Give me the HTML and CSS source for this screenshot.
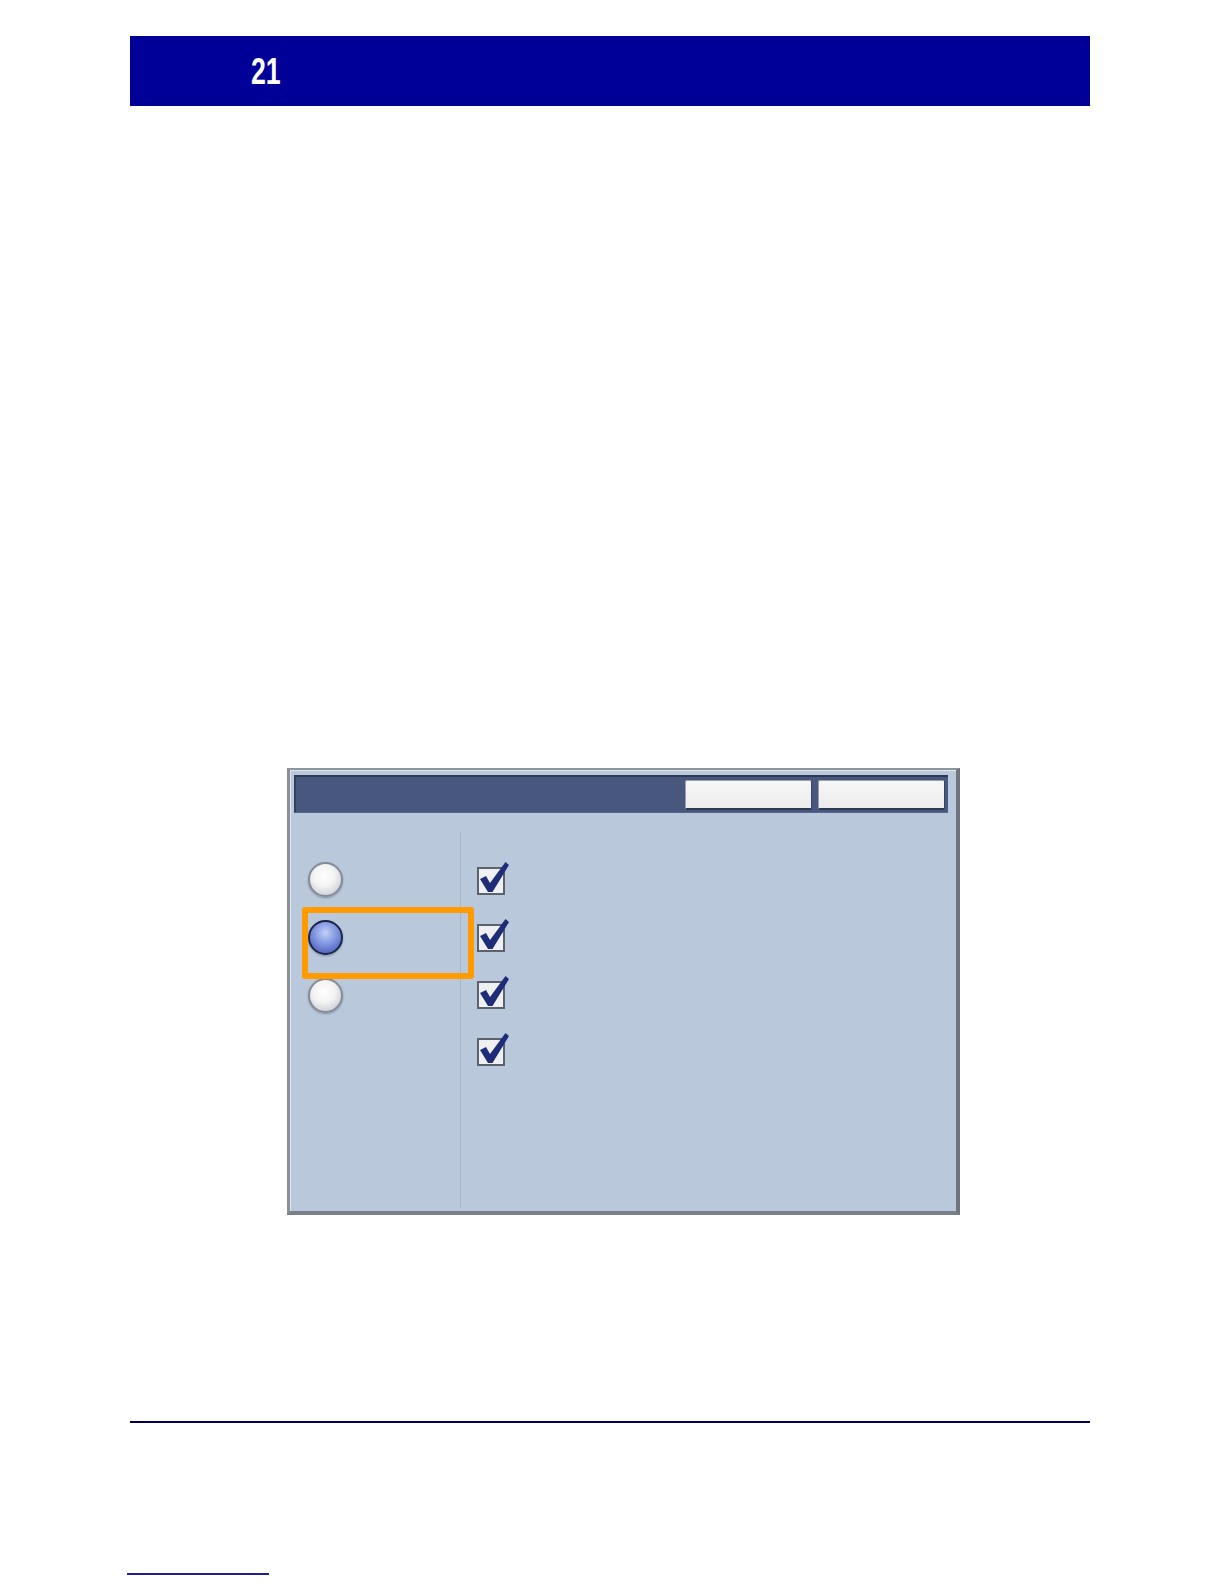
FILE: index.html
```html
<!DOCTYPE html>
<html>
<head>
<meta charset="utf-8">
<link rel="stylesheet" href="styles.css">
</head>
<body>
<div class="page">
  <div class="header"><span class="num">21</span></div>

  <div class="panel">
    <div class="titlebar">
      <div class="buttons">
        <div class="btn"></div>
        <div class="btn"></div>
      </div>
    </div>
    <div class="body">
      <div class="col-left">
        <div class="radio"></div>
        <div class="radio selected"></div>
        <div class="radio"></div>
      </div>
      <div class="col-right">
        <svg class="check" viewBox="0 0 34 34" width="34" height="34"><rect x="1" y="5" width="26" height="26" fill="#eef0f3" stroke="#5c626b" stroke-width="2"/><polygon points="3,16 9,13 13,20 28.5,-1 32,2 15.5,29 11,29" fill="#1f2d78"/></svg>
        <svg class="check" viewBox="0 0 34 34" width="34" height="34"><rect x="1" y="5" width="26" height="26" fill="#eef0f3" stroke="#5c626b" stroke-width="2"/><polygon points="3,16 9,13 13,20 28.5,-1 32,2 15.5,29 11,29" fill="#1f2d78"/></svg>
        <svg class="check" viewBox="0 0 34 34" width="34" height="34"><rect x="1" y="5" width="26" height="26" fill="#eef0f3" stroke="#5c626b" stroke-width="2"/><polygon points="3,16 9,13 13,20 28.5,-1 32,2 15.5,29 11,29" fill="#1f2d78"/></svg>
        <svg class="check" viewBox="0 0 34 34" width="34" height="34"><rect x="1" y="5" width="26" height="26" fill="#eef0f3" stroke="#5c626b" stroke-width="2"/><polygon points="3,16 9,13 13,20 28.5,-1 32,2 15.5,29 11,29" fill="#1f2d78"/></svg>
      </div>
    </div>
    <div class="highlight"></div>
  </div>

  <div class="rule"></div>
  <div class="short-rule"></div>
</div>
</body>
</html>
```

FILE: styles.css
```css
html, body {
  margin: 0;
  padding: 0;
  background: #ffffff;
  font-family: "Liberation Sans", Arial, sans-serif;
}

.page {
  padding-top: 36px;
  height: 1584px;
  box-sizing: border-box;
}

.header {
  margin-left: 130px;
  width: 960px;
  height: 70px;
  background: #000099;
  display: flex;
  align-items: center;
  padding-left: 121px;
  box-sizing: border-box;
}

.num {
  display: inline-block;
  color: #ffffff;
  font-family: "Liberation Sans Narrow", "Liberation Sans", Arial, sans-serif;
  font-weight: bold;
  font-size: 36px;
  line-height: 1;
  padding-top: 2px;
  transform: scaleX(0.74);
  transform-origin: left center;
}

.panel {
  position: relative;
  margin-top: 662px;
  margin-left: 287px;
  width: 673px;
  height: 447px;
  box-sizing: border-box;
  background: #b9c9db;
  border-style: solid;
  border-width: 2px 4px 4px 3px;
  border-color: #8e949c #6f757e #7a8089 #8a9098;
  box-shadow: inset 1px 1px 0 #dfe6ee;
}

.titlebar {
  margin: 5px 8px 0 4px;
  height: 38px;
  box-sizing: border-box;
  background: #47577d;
  border-top: 2px solid #2e3956;
  border-left: 2px solid #33405f;
  border-bottom: 1px solid #56668c;
  display: flex;
  align-items: center;
}

.buttons {
  margin-left: auto;
  display: flex;
  gap: 6px;
  padding-right: 3px;
}

.btn {
  width: 127px;
  height: 30px;
  box-sizing: border-box;
  background: linear-gradient(#f6f6f6, #ececec);
  border: 1px solid #9aa1ab;
  border-right-color: #3a4560;
  border-bottom: 2px solid #2f3a55;
  border-radius: 2px;
}

.body {
  display: flex;
  height: 398px;
  box-sizing: border-box;
  padding-top: 19px;
  padding-bottom: 3px;
}

.col-left {
  width: 170px;
  box-sizing: border-box;
  padding: 30px 0 0 18px;
  display: flex;
  flex-direction: column;
  gap: 23px;
}

.col-right {
  flex: 1;
  border-left: 1px solid #a6b4c6;
  padding: 31px 0 0 16px;
  display: flex;
  flex-direction: column;
  gap: 23px;
}

.radio {
  width: 35px;
  height: 35px;
  box-sizing: border-box;
  border-radius: 50%;
  border: 2px solid #858b95;
  background: radial-gradient(circle at 45% 38%, #ffffff 0%, #f3f3f3 42%, #d0d4da 75%, #a9aeb7 100%);
  box-shadow: 0 1px 2px rgba(60, 70, 90, 0.45);
}

.radio.selected {
  border: 2px solid #1c2547;
  background: radial-gradient(circle at 50% 35%, #c3d0f6 0%, #8ea2e6 35%, #5f74cc 70%, #3b4c9a 100%);
}

.check {
  display: block;
  overflow: visible;
}

.highlight {
  position: absolute;
  left: 12px;
  top: 137px;
  width: 172px;
  height: 72px;
  box-sizing: border-box;
  border: 6px solid #ff9a00;
  border-radius: 3px;
}

.rule {
  margin-top: 206px;
  margin-left: 130px;
  width: 960px;
  height: 2px;
  background: #00004f;
}

.short-rule {
  margin-top: 150px;
  margin-left: 127px;
  width: 142px;
  height: 2px;
  background: #1e1e9a;
}
```
